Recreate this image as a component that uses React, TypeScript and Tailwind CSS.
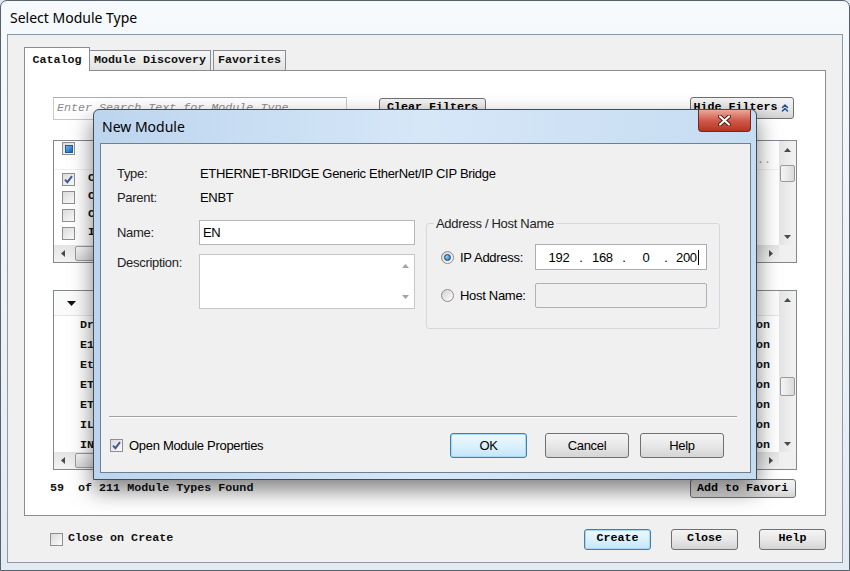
import { ChevronsUp } from 'lucide-react';

const MONO = "font-['Liberation_Mono',monospace]";
const UI = "font-['Liberation_Sans','Arial',sans-serif]";
const TITLE = "font-['Noto_Sans','Open_Sans',sans-serif]";

const btn =
  'flex items-center justify-center rounded-[3px] border border-[#707070] bg-linear-to-b from-[#f4f4f4] via-[#e8e8e8] to-[#d4d4d4] text-black';
const btnFocus =
  'flex items-center justify-center rounded-[3px] border border-[#3c7fb1] bg-linear-to-b from-[#eef8fe] via-[#dcf1fc] to-[#c2e6fb] shadow-[inset_0_0_0_1px_#a9d9f6] text-black';

// only the first letters of these show past the dialog
const categories = ['Comm', 'Conv', 'Ctrl', 'I/O'];

const modules = [
  ['Drive', 'Communication'],
  ['E1', 'Communication'],
  ['Eth', 'Communication'],
  ['ETH', 'Communication'],
  ['ETM', 'Communication'],
  ['ILX', 'Communication'],
  ['IND', 'Comm'],
];

function Arrow({ dir, color = '#4a4a4a' }: { dir: 'up' | 'down' | 'left' | 'right'; color?: string }) {
  const v = dir === 'up' || dir === 'down';
  const d = {
    up: 'M0 4 L3.5 0 L7 4Z',
    down: 'M0 0 L7 0 L3.5 4Z',
    left: 'M4 0 L4 7 L0 3.5Z',
    right: 'M0 0 L4 3.5 L0 7Z',
  }[dir];
  return (
    <svg width={v ? 7 : 4} height={v ? 4 : 7} viewBox={v ? '0 0 7 4' : '0 0 4 7'}>
      <path d={d} fill={color} />
    </svg>
  );
}

function CheckBox({ checked = false, mixed = false }: { checked?: boolean; mixed?: boolean }) {
  return (
    <span className="flex h-[13px] w-[13px] shrink-0 items-center justify-center border border-[#8f8f8f] bg-linear-to-br from-[#dadada] to-[#fcfcfc]">
      {checked && (
        <svg width="9" height="9" viewBox="0 0 9 9">
          <path d="M1 4.6 L3.4 7.2 L8 1.2" fill="none" stroke="#3f5791" strokeWidth="1.9" />
        </svg>
      )}
      {mixed && <span className="h-[8px] w-[8px] border border-[#1d5b98] bg-linear-to-br from-[#6cb6ec] to-[#1f64a8]" />}
    </span>
  );
}

function Radio({ on = false }: { on?: boolean }) {
  return (
    <span className="flex h-[13px] w-[13px] shrink-0 items-center justify-center rounded-full border border-[#8b8b8b] bg-linear-to-br from-[#d2d2d2] to-white">
      {on && (
        <span className="h-[7px] w-[7px] rounded-full border border-[#17466f] bg-[radial-gradient(circle_at_35%_35%,#8fd0fa,#1f69a8)]" />
      )}
    </span>
  );
}

function VScroll({ thumb }: { thumb: string }) {
  return (
    <div className="flex w-[17px] shrink-0 flex-col bg-linear-to-r from-[#e4e4e4] to-[#f3f3f3]">
      <div className="flex h-[17px] items-center justify-center">
        <Arrow dir="up" />
      </div>
      <div className="flex-1">
        <div
          className={`mx-[1px] rounded-[2px] border border-[#9b9b9b] bg-linear-to-r from-[#f6f6f6] to-[#dadada] ${thumb}`}
        />
      </div>
      <div className="flex h-[17px] items-center justify-center">
        <Arrow dir="down" />
      </div>
    </div>
  );
}

function HScroll() {
  return (
    <div className="flex h-[17px] shrink-0">
      <div className="flex flex-1 items-center bg-linear-to-b from-[#e4e4e4] to-[#f3f3f3]">
        <div className="flex w-[17px] justify-center">
          <Arrow dir="left" />
        </div>
        <div className="ml-[4px] h-[15px] w-[260px] rounded-[2px] border border-[#9b9b9b] bg-linear-to-b from-[#f6f6f6] to-[#dadada]" />
        <div className="ml-auto flex w-[17px] justify-center">
          <Arrow dir="right" />
        </div>
      </div>
      <div className="w-[17px] bg-[#f0f0f0]" />
    </div>
  );
}

function NewModuleDialog() {
  return (
    <div className="absolute left-[93px] top-[109px] flex h-[371px] w-[664px] flex-col rounded-t-[6px] border border-[#3e4c5a] bg-linear-to-r from-[#bcd5ee] via-[#d6e7f8] to-[#c6dcf1] shadow-[0_10px_22px_rgba(0,0,0,0.5)]">
      <div className={`relative flex h-[33px] shrink-0 items-center pl-[8px] text-[14px] text-black ${TITLE}`}>
        New Module
        <div className="absolute right-[5px] top-0 flex h-[22px] w-[53px] items-center justify-center rounded-b-[4px] border border-t-0 border-[#6b2a22] bg-linear-to-b from-[#e9a899] via-[#d05a4b] to-[#b8321f]">
          <svg width="13" height="11" viewBox="0 0 13 11">
            <path d="M2 1.5 L11 9.5 M11 1.5 L2 9.5" stroke="#4a1a14" strokeWidth="4" strokeLinecap="round" />
            <path d="M2 1.5 L11 9.5 M11 1.5 L2 9.5" stroke="#ffffff" strokeWidth="2.2" strokeLinecap="round" />
          </svg>
        </div>
      </div>

      <div className={`mb-[6px] ml-[6px] mr-[5px] flex flex-1 flex-col border border-[#6f8091] bg-[#f0f0f0] pl-[16px] pt-[21px] text-[13px] leading-[17px] tracking-[-0.3px] text-black ${UI}`}>
        <div className="flex">
          <span className="w-[83px] text-[#222]">Type:</span>
          <span>ETHERNET-BRIDGE Generic EtherNet/IP CIP Bridge</span>
        </div>
        <div className="mt-[7px] flex">
          <span className="w-[83px] text-[#222]">Parent:</span>
          <span>ENBT</span>
        </div>

        <div className="mt-[9px] flex items-start">
          <div className="flex flex-col pt-[5px]">
            <div className="flex items-center">
              <span className="w-[82px] text-[#222]">Name:</span>
              <div className="flex h-[25px] w-[216px] items-center border border-[#b3b7bd] bg-white pl-[3px]">EN</div>
            </div>
            <div className="mt-[9px] flex items-start">
              <span className="w-[82px] text-[#222]">Description:</span>
              <div className="flex h-[55px] w-[216px] border border-[#c3c7cc] bg-white">
                <div className="flex-1" />
                <div className="flex w-[17px] flex-col items-center justify-between py-[9px]">
                  <Arrow dir="up" color="#a3a3a3" />
                  <Arrow dir="down" color="#a3a3a3" />
                </div>
              </div>
            </div>
          </div>

          <fieldset className="ml-[11px] w-[294px] rounded-[3px] border border-[#d3d9de] pb-[20px]">
            <legend className="ml-[7px] px-[2px] text-[#222]">Address / Host Name</legend>
            <div className="mt-[12px] flex h-[26px] items-center pl-[14px]">
              <Radio on />
              <span className="ml-[6px] w-[75px] whitespace-nowrap">IP Address:</span>
              <div className="flex h-[26px] w-[172px] items-center border border-[#abadb3] bg-white pl-[12px]">
                <span className="w-[22px] text-center">192</span>
                <span className="w-[22px] text-center">.</span>
                <span className="w-[20px] text-center">168</span>
                <span className="w-[24px] text-center">.</span>
                <span className="w-[20px] text-center">0</span>
                <span className="w-[20px] text-center">.</span>
                <span>200</span>
                <span className="ml-[1px] h-[15px] w-[1px] bg-black" />
              </div>
            </div>
            <div className="mt-[13px] flex h-[25px] items-center pl-[14px]">
              <Radio />
              <span className="ml-[6px] w-[75px] whitespace-nowrap">Host Name:</span>
              <div className="h-[25px] w-[172px] rounded-[2px] border border-[#adb2b5] bg-[#f0f0f0]" />
            </div>
          </fieldset>
        </div>

        <div className="mt-auto -ml-[8px] mr-[13px] h-[2px] border-t border-b border-t-[#a0a0a0] border-b-white" />
        <div className="-ml-[7px] mb-[14px] mt-[15px] flex h-[25px] items-center">
          <CheckBox checked />
          <span className="ml-[6px]">Open Module Properties</span>
          <div className={`ml-auto h-[25px] w-[77px] ${btnFocus}`}>OK</div>
          <div className={`ml-[18px] h-[25px] w-[84px] ${btn}`}>Cancel</div>
          <div className={`ml-[11px] mr-[26px] h-[25px] w-[84px] ${btn}`}>Help</div>
        </div>
      </div>
    </div>
  );
}

export default function App() {
  return (
    <div className="relative h-[571px] w-[850px] overflow-hidden bg-[#dfe8f1]">
      <div className="flex h-full w-full flex-col rounded-t-[7px] border border-[#56616c] bg-linear-to-b from-[#f7fafc] via-[#eef3f8] to-[#e2eaf3]">
        <div className={`flex h-[33px] shrink-0 items-center pl-[9px] text-[14px] text-black ${TITLE}`}>
          Select Module Type
        </div>

        <div className={`mx-[6px] mb-[7px] flex flex-1 flex-col border border-[#8d99a5] bg-[#f0f0f0] px-[16px] pt-[12px] text-[11.7px] font-bold text-[#111] ${MONO}`}>
          {/* tabs */}
          <div className="flex h-[23px] shrink-0 items-end">
            <div className="relative z-10 -mb-px flex h-[24px] w-[66px] justify-center border border-b-0 border-[#898c95] bg-white pt-[4px]">
              Catalog
            </div>
            <div className="flex h-[20px] w-[121px] items-center justify-center border border-b-0 border-l-0 border-[#898c95] bg-linear-to-b from-[#f6f6f6] to-[#e3e3e3]">
              Module Discovery
            </div>
            <div className="ml-[2px] flex h-[20px] w-[73px] items-center justify-center border border-b-0 border-[#898c95] bg-linear-to-b from-[#f6f6f6] to-[#e3e3e3]">
              Favorites
            </div>
          </div>

          {/* tab panel */}
          <div className="flex h-[446px] shrink-0 flex-col border border-[#898c95] bg-white px-[28px] pt-[26px]">
            <div className="flex h-[23px] shrink-0 items-start">
              <div className="flex h-[23px] w-[294px] items-center border border-[#c5c9cf] border-t-[#abadb3] pl-[3px] font-normal italic text-[#8c8c8c]">
                Enter Search Text for Module Type
              </div>
              <div className={`ml-[32px] mt-[1px] h-[20px] w-[107px] ${btn}`}>Clear Filters</div>
              <div className={`ml-auto mr-[3px] h-[22px] w-[104px] gap-[1px] ${btn}`}>
                Hide Filters
                <ChevronsUp size={12} strokeWidth={3} color="#1d4f91" />
              </div>
            </div>

            {/* category filter list */}
            <div className="mt-[20px] flex h-[123px] shrink-0 flex-col border border-[#828790]">
              <div className="flex flex-1">
                <div className="flex flex-1 flex-col">
                  <div className="flex h-[29px] items-start justify-between border-b border-[#f0f0f0] pl-[8px] pr-[8px] pt-[1px]">
                    <CheckBox mixed />
                    <span className="mt-[10px] font-normal text-[#9a9a9a]">...</span>
                  </div>
                  {categories.map((c, i) => (
                    <div key={c} className="flex h-[18px] items-center pl-[8px]">
                      <CheckBox checked={i === 0} />
                      <span className="ml-[13px]">{c}</span>
                    </div>
                  ))}
                </div>
                <VScroll thumb="mt-[7px] h-[17px]" />
              </div>
              <HScroll />
            </div>

            {/* module list */}
            <div className="mt-[27px] flex h-[180px] shrink-0 flex-col border border-[#828790]">
              <div className="flex flex-1 overflow-hidden">
                <div className="flex flex-1 flex-col">
                  <div className="flex h-[25px] shrink-0 items-center border-b border-[#e5e5e5] bg-[#fbfbfb] pl-[13px]">
                    <svg width="9" height="5" viewBox="0 0 9 5">
                      <path d="M0 0 L9 0 L4.5 5Z" fill="#111" />
                    </svg>
                  </div>
                  {modules.map(([name, cat], i) => (
                    <div key={i} className="flex h-[20px] shrink-0 items-center justify-between pl-[26px] pr-[9px]">
                      <span>{name}</span>
                      <span>{cat.endsWith('on') ? cat : 'on'}</span>
                    </div>
                  ))}
                </div>
                <VScroll thumb="mt-[69px] h-[19px]" />
              </div>
              <HScroll />
            </div>

            <div className="mt-[9px] flex h-[19px] items-center">
              <span className="-ml-[3px] whitespace-pre">59  of 211 Module Types Found</span>
              <div className={`ml-auto mr-px h-[19px] w-[106px] justify-start overflow-hidden whitespace-nowrap pl-[6px] ${btn}`}>
                Add to Favori
              </div>
            </div>
          </div>

          {/* bottom row */}
          <div className="flex flex-1 items-center">
            <span className="ml-[26px]">
              <CheckBox />
            </span>
            <span className="ml-[5px]">Close on Create</span>
            <div className={`ml-auto h-[21px] w-[67px] ${btnFocus}`}>Create</div>
            <div className={`ml-[20px] h-[21px] w-[67px] ${btn}`}>Close</div>
            <div className={`ml-[21px] h-[21px] w-[67px] ${btn}`}>Help</div>
          </div>
        </div>
      </div>

      <NewModuleDialog />
    </div>
  );
}
